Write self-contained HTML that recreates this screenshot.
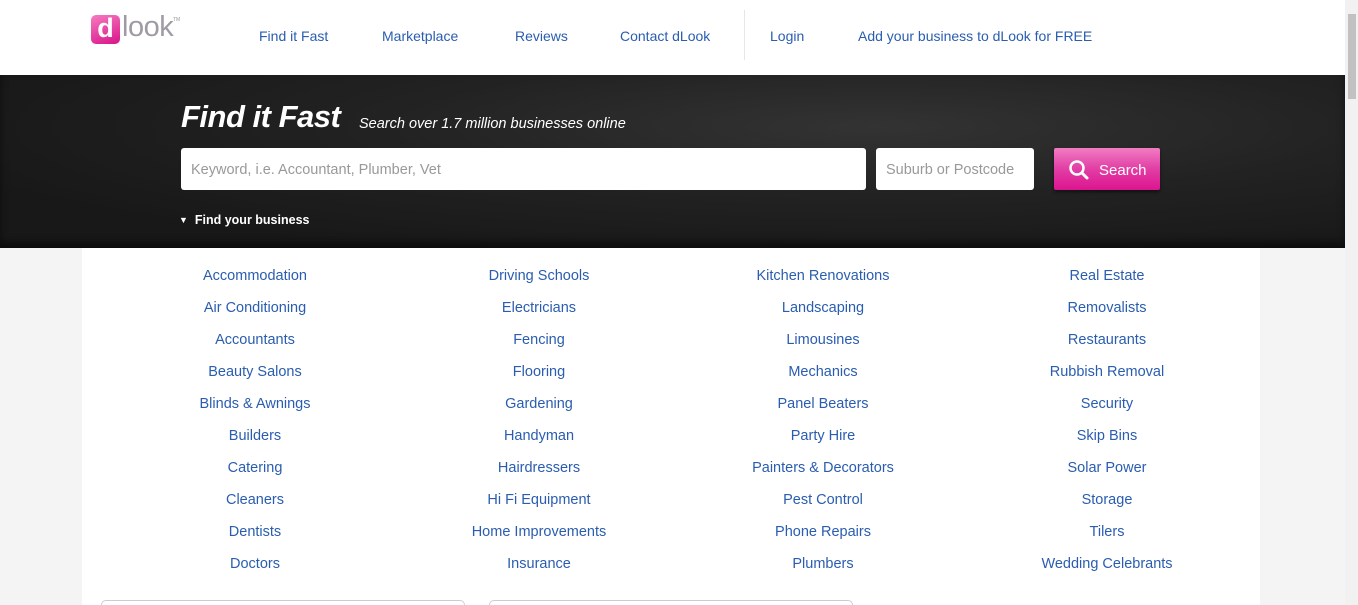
<!DOCTYPE html>
<html><head><meta charset="utf-8"><style>
*{margin:0;padding:0;box-sizing:border-box}
html{width:1358px;height:605px;overflow:hidden}
body{width:1358px;height:605px;overflow:hidden;background:#f4f4f4;font-family:"Liberation Sans",sans-serif;position:relative}
.hdr{position:absolute;left:0;top:0;width:1345px;height:75px;background:#fff}
.nav a{position:absolute;top:28px;font-size:14px;color:#2a5db0;text-decoration:none;white-space:nowrap}
.sep{position:absolute;left:744px;top:10px;width:1px;height:50px;background:#e6e6e6}
.logo{position:absolute;left:91px;top:15px;width:29px;height:29px;border-radius:5px;background:linear-gradient(160deg,#f67bc0,#d8148a);color:#fff;font-weight:bold;font-size:27px;line-height:27px;text-align:center}
.logot{position:absolute;left:122px;top:11px;font-size:29px;color:#a09aa4;letter-spacing:-0.5px}
.tm{position:absolute;left:173px;top:17px;font-size:5px;color:#999}
.ban{position:absolute;left:0;top:75px;width:1345px;height:173px;background:radial-gradient(ellipse at 65% 30%,#333 0%,#222 40%,#181818 80%);box-shadow:inset 0 -6px 8px rgba(0,0,0,.5)}
.h1{position:absolute;left:181px;top:99px;color:#fff;font-style:italic;font-weight:bold;font-size:31px;letter-spacing:-0.5px}
.sub{position:absolute;left:359px;top:116px;color:#fff;font-style:italic;font-size:14.5px}
.in{position:absolute;top:148px;height:42px;background:#fff;border-radius:3px;color:#999;font-size:14.5px;padding:14px 10px}
.btn{position:absolute;left:1054px;top:148px;width:106px;height:42px;border-radius:2px;background:linear-gradient(#f17cc2,#e23ea5 50%,#dc1490);color:#fff;font-size:15px;box-shadow:0 2px 3px rgba(0,0,0,.5)}
.fyb{position:absolute;left:179px;top:213px;color:#fff;font-size:12.5px;font-weight:bold}
.box{position:absolute;left:82px;top:248px;width:1178px;height:357px;background:#fff}
.c a{position:absolute;width:284px;text-align:center;font-size:14.5px;color:#2a5db0;text-decoration:none;white-space:nowrap}
.card{position:absolute;top:600px;height:5px;border:1px solid #ccc;border-bottom:none;border-radius:5px 5px 0 0;background:#fff}
.sb{position:absolute;left:1345px;top:0;width:13px;height:605px;background:#f1f1f1}
.sb i{position:absolute;left:3px;top:14px;width:8px;height:85px;background:#c1c1c1}
</style></head><body>
<div class="hdr">
<div class="logo">d</div><div class="logot">look</div><div class="tm">TM</div>
<div class="nav">
<a style="left:259px">Find it Fast</a><a style="left:382px">Marketplace</a><a style="left:515px">Reviews</a><a style="left:620px">Contact dLook</a>
<a style="left:770px">Login</a><a style="left:858px">Add your business to dLook for FREE</a></div>
<div class="sep"></div>
</div>
<div class="ban"></div>
<div class="h1">Find it Fast</div>
<div class="sub">Search over 1.7 million businesses online</div>
<div class="in" style="left:181px;width:685px">Keyword, i.e. Accountant, Plumber, Vet</div>
<div class="in" style="left:876px;width:158px">Suburb or Postcode</div>
<div class="btn"><svg style="position:absolute;left:14px;top:11px" width="22" height="22" viewBox="0 0 22 22"><circle cx="9" cy="9" r="6.5" fill="none" stroke="#fff" stroke-width="2.5"/><path d="M14 14l5 5" stroke="#fff" stroke-width="3" stroke-linecap="round"/></svg><span style="position:absolute;left:45px;top:14px">Search</span></div>
<div class="fyb"><span style="font-size:9px;position:relative;top:-1px">&#9660;</span>&nbsp; Find your business</div>
<div class="box"></div>
<div class="c">
<a style="left:113px;top:268px">Accommodation</a><a style="left:113px;top:300px">Air Conditioning</a><a style="left:113px;top:332px">Accountants</a><a style="left:113px;top:364px">Beauty Salons</a><a style="left:113px;top:396px">Blinds &amp; Awnings</a><a style="left:113px;top:428px">Builders</a><a style="left:113px;top:460px">Catering</a><a style="left:113px;top:492px">Cleaners</a><a style="left:113px;top:524px">Dentists</a><a style="left:113px;top:556px">Doctors</a>
<a style="left:397px;top:268px">Driving Schools</a><a style="left:397px;top:300px">Electricians</a><a style="left:397px;top:332px">Fencing</a><a style="left:397px;top:364px">Flooring</a><a style="left:397px;top:396px">Gardening</a><a style="left:397px;top:428px">Handyman</a><a style="left:397px;top:460px">Hairdressers</a><a style="left:397px;top:492px">Hi Fi Equipment</a><a style="left:397px;top:524px">Home Improvements</a><a style="left:397px;top:556px">Insurance</a>
<a style="left:681px;top:268px">Kitchen Renovations</a><a style="left:681px;top:300px">Landscaping</a><a style="left:681px;top:332px">Limousines</a><a style="left:681px;top:364px">Mechanics</a><a style="left:681px;top:396px">Panel Beaters</a><a style="left:681px;top:428px">Party Hire</a><a style="left:681px;top:460px">Painters &amp; Decorators</a><a style="left:681px;top:492px">Pest Control</a><a style="left:681px;top:524px">Phone Repairs</a><a style="left:681px;top:556px">Plumbers</a>
<a style="left:965px;top:268px">Real Estate</a><a style="left:965px;top:300px">Removalists</a><a style="left:965px;top:332px">Restaurants</a><a style="left:965px;top:364px">Rubbish Removal</a><a style="left:965px;top:396px">Security</a><a style="left:965px;top:428px">Skip Bins</a><a style="left:965px;top:460px">Solar Power</a><a style="left:965px;top:492px">Storage</a><a style="left:965px;top:524px">Tilers</a><a style="left:965px;top:556px">Wedding Celebrants</a>
</div>
<div class="card" style="left:101px;width:364px"></div>
<div class="card" style="left:489px;width:364px"></div>
<div class="sb"><i></i></div>
</body></html>
